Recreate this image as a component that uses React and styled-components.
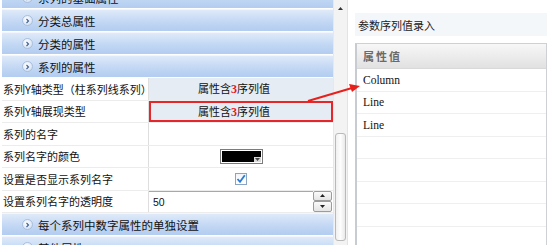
import styled, { createGlobalStyle } from "styled-components";

const GlobalStyle = createGlobalStyle`
  html, body {
    margin: 0;
    padding: 0;
    background: #ffffff;
  }
  body {
    font-family: "Noto Sans CJK SC", "Liberation Sans", sans-serif;
    font-size: 11px;
    color: #111;
  }
`;

const Page = styled.div`
  position: relative;
  width: 550px;
  height: 245px;
  overflow: hidden;
  display: flex;
  align-items: flex-start;
`;

const LeftPanel = styled.div`
  width: 348px;
  height: 245px;
  display: flex;
  border-right: 1px solid #e3e3e3;
  box-sizing: border-box;
`;

const Viewport = styled.div`
  width: 333px;
  height: 245px;
  overflow: hidden;
  padding-left: 2px;
  box-sizing: border-box;
`;

const Scroller = styled.div`
  margin-top: -14px;
`;

const GroupHeader = styled.div`
  height: 22px;
  margin-bottom: 1px;
  display: flex;
  align-items: center;
  gap: 5px;
  padding-left: 20px;
  background: linear-gradient(#dfeaf9, #c0d6f3 60%, #b3cdf0);
  border-top: 1px solid #f3f7fd;
  box-sizing: border-box;
  font-size: 11.5px;
  color: #111;
`;

const ExpandIcon = styled.span`
  width: 11px;
  height: 11px;
  border-radius: 50%;
  border: 1px solid #a9bfdc;
  background: radial-gradient(circle at 40% 35%, #ffffff, #dfe9f6 60%, #c4d6ee);
  display: flex;
  align-items: center;
  justify-content: center;
  box-sizing: border-box;
`;

const PropRow = styled.div`
  display: grid;
  grid-template-columns: 146px 1fr;
  height: 22.5px;
  border-bottom: 1px solid #ececec;
  box-sizing: border-box;
`;

const Label = styled.div`
  padding-left: 1px;
  display: flex;
  align-items: center;
  white-space: nowrap;
  overflow: hidden;
  font-size: 11px;
`;

const Value = styled.div`
  border-left: 1px solid #dedede;
  display: flex;
  align-items: center;
  justify-content: ${(p) => (p.$left ? "flex-start" : "center")};
  padding-right: ${(p) => (p.$readonly ? "14px" : "0")};
  background: ${(p) => (p.$readonly ? "#e5ecf4" : "#ffffff")};
  box-shadow: ${(p) => (p.$marked ? "inset 0 0 0 2px #e5262a" : "none")};
  font-size: 11px;
  position: relative;
`;

const Count = styled.span`
  color: #e81a1a;
  font-weight: bold;
  font-family: "Liberation Serif", serif;
  font-size: 12px;
`;

const ColorBox = styled.div`
  width: 43px;
  height: 15px;
  border: 1px solid #7c7c7c;
  box-sizing: border-box;
  padding: 1px;
  background: #ffffff;
  position: relative;
`;

const ColorFill = styled.div`
  width: 100%;
  height: 100%;
  background: #000;
`;

const ColorDrop = styled.div`
  position: absolute;
  right: 1px;
  bottom: 1px;
  width: 7px;
  height: 5px;
  background: #d9d9d9;
  display: flex;
  align-items: center;
  justify-content: center;
`;

const Check = styled.div`
  width: 12px;
  height: 12px;
  border: 1px solid #8aa4c4;
  box-sizing: border-box;
  background: linear-gradient(#f2f5f9, #ffffff);
  display: flex;
  align-items: center;
  justify-content: center;
`;

const NumberInput = styled.div`
  flex: 1;
  align-self: stretch;
  display: flex;
  align-items: center;
  border-top: 1px solid #a8a8a8;
  padding-left: 4px;
  font-family: "Liberation Sans", sans-serif;
  font-size: 10.5px;
`;

const Spinner = styled.div`
  width: 19px;
  align-self: stretch;
  display: flex;
  flex-direction: column;
  margin-right: 1px;
`;

const SpinButton = styled.div`
  flex: 1;
  border: 1px solid #9c9c9c;
  border-radius: 2px;
  background: linear-gradient(#fbfbfb, #e4e4e4);
  display: flex;
  align-items: center;
  justify-content: center;
  box-sizing: border-box;
`;

const ScrollBar = styled.div`
  width: 14px;
  height: 245px;
  background: #f3f3f3;
  border-left: 1px solid #e8e8e8;
  box-sizing: border-box;
  display: flex;
  flex-direction: column;
  align-items: center;
`;

const ScrollArrow = styled.div`
  height: 17px;
  display: flex;
  align-items: center;
  justify-content: center;
`;

const Thumb = styled.div`
  margin-top: 116px;
  width: 11px;
  height: 108px;
  border: 1px solid #b9b9b9;
  border-radius: 3px;
  background: linear-gradient(90deg, #f0f0f0, #fdfdfd 50%, #e9e9e9);
  box-sizing: border-box;
`;

const RightPanel = styled.div`
  margin-left: 7px;
  width: 192px;
  padding-top: 13px;
`;

const Title = styled.div`
  height: 23px;
  display: flex;
  align-items: center;
  padding-left: 3px;
  background: #f4f7fa;
  font-size: 11px;
  color: #222;
`;

const Table = styled.div`
  margin-top: 7px;
  border: 1px solid #cdd1d5;
  border-left: 2px solid #c6ccd2;
  height: 240px;
`;

const TableHead = styled.div`
  height: 24px;
  display: flex;
  align-items: center;
  padding-left: 6px;
  background: linear-gradient(#f7f7f7, #e1e1e1);
  border-bottom: 1px solid #d9d9d9;
  font-weight: bold;
  letter-spacing: 2px;
  color: #6a6a6a;
  font-size: 11px;
`;

const TableRow = styled.div`
  height: 22.5px;
  display: flex;
  align-items: center;
  padding-left: 6px;
  border-bottom: 1px solid #efefef;
  box-sizing: border-box;
  font-family: "Liberation Serif", serif;
  font-size: 11.5px;
  color: #111;
`;

const ArrowLayer = styled.svg`
  position: absolute;
  left: 0;
  top: 0;
  pointer-events: none;
`;

const Chevron = () => (
  <svg width="5" height="6" viewBox="0 0 5 6">
    <path d="M1.5 1 L3.5 3 L1.5 5" stroke="#3a5f93" strokeWidth="1.1" fill="none" />
  </svg>
);

const Group = ({ children }) => (
  <GroupHeader>
    <ExpandIcon>
      <Chevron />
    </ExpandIcon>
    <span>{children}</span>
  </GroupHeader>
);

const SeriesValue = () => (
  <span>
    属性含<Count>3</Count>序列值
  </span>
);

const rows = ["Column", "Line", "Line", "", "", "", "", "", ""];

export default function App() {
  return (
    <Page>
      <GlobalStyle />
      <LeftPanel>
        <Viewport>
          <Scroller>
            <Group>系列的基础属性</Group>
            <Group>分类总属性</Group>
            <Group>分类的属性</Group>
            <Group>系列的属性</Group>
            <PropRow>
              <Label>系列Y轴类型（柱系列线系列）</Label>
              <Value $readonly>
                <SeriesValue />
              </Value>
            </PropRow>
            <PropRow>
              <Label>系列Y轴展现类型</Label>
              <Value $readonly $marked>
                <SeriesValue />
              </Value>
            </PropRow>
            <PropRow>
              <Label>系列的名字</Label>
              <Value />
            </PropRow>
            <PropRow>
              <Label>系列名字的颜色</Label>
              <Value>
                <ColorBox>
                  <ColorFill />
                  <ColorDrop>
                    <svg width="5" height="3" viewBox="0 0 5 3">
                      <path d="M0 0 H5 L2.5 3 Z" fill="#444" />
                    </svg>
                  </ColorDrop>
                </ColorBox>
              </Value>
            </PropRow>
            <PropRow>
              <Label>设置是否显示系列名字</Label>
              <Value>
                <Check>
                  <svg width="10" height="10" viewBox="0 0 10 10">
                    <path d="M1.5 5 L4 7.8 L8.8 1.2" stroke="#2b7bd6" strokeWidth="1.8" fill="none" />
                  </svg>
                </Check>
              </Value>
            </PropRow>
            <PropRow>
              <Label>设置系列名字的透明度</Label>
              <Value $left>
                <NumberInput>50</NumberInput>
                <Spinner>
                  <SpinButton>
                    <svg width="5" height="3" viewBox="0 0 5 3">
                      <path d="M0 3 H5 L2.5 0 Z" fill="#222" />
                    </svg>
                  </SpinButton>
                  <SpinButton>
                    <svg width="5" height="3" viewBox="0 0 5 3">
                      <path d="M0 0 H5 L2.5 3 Z" fill="#222" />
                    </svg>
                  </SpinButton>
                </Spinner>
              </Value>
            </PropRow>
            <Group>每个系列中数字属性的单独设置</Group>
            <Group>其他属性</Group>
          </Scroller>
        </Viewport>
        <ScrollBar>
          <ScrollArrow>
            <svg width="5" height="3" viewBox="0 0 5 3">
              <path d="M0 3 H5 L2.5 0 Z" fill="#333" />
            </svg>
          </ScrollArrow>
          <Thumb />
        </ScrollBar>
      </LeftPanel>
      <RightPanel>
        <Title>参数序列值录入</Title>
        <Table>
          <TableHead>属性值</TableHead>
          {rows.map((r, i) => (
            <TableRow key={i}>{r}</TableRow>
          ))}
        </Table>
      </RightPanel>
      <ArrowLayer width="550" height="245">
        <line x1="308" y1="101" x2="352" y2="88" stroke="#e8201c" strokeWidth="2" />
        <path d="M360 86 L349 84 L352 92 Z" fill="#e8201c" />
      </ArrowLayer>
    </Page>
  );
}
